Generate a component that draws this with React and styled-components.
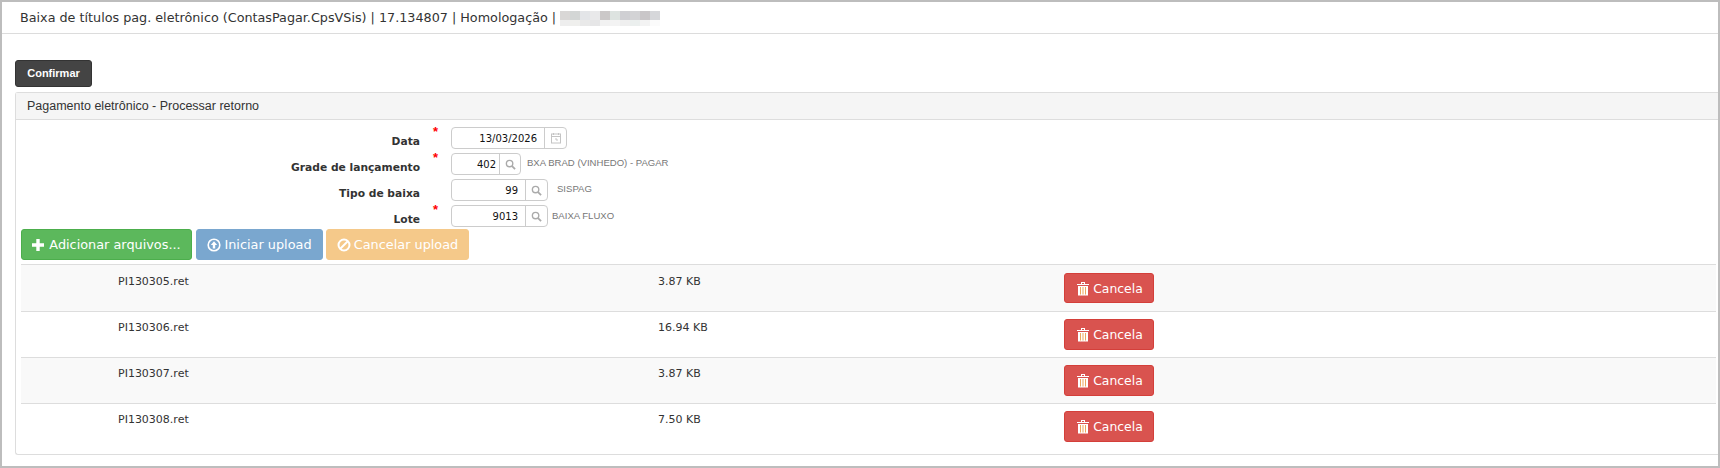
import React from "react";
import styled, { createGlobalStyle, css } from "styled-components";

const Global = createGlobalStyle`
  html, body { margin: 0; padding: 0; background: #fff; }
  * { box-sizing: border-box; }
`;

const Frame = styled.div`
  width: 1720px; height: 468px; overflow: hidden;
  border: 2px solid #bdbdbd;
  background: #fff;
  font-family: "DejaVu Sans", Verdana, sans-serif;
  color: #333;
  display: flex; flex-direction: column;
`;
const TitleBar = styled.div`
  height: 32px; flex: none; border-bottom: 1px solid #dcdcdc;
  display: flex; align-items: center; gap: 4px; padding: 0 0 0 18px;
  font-size: 12.75px; color: #333; white-space: nowrap;
`;
const Blur = styled.span`
  display: inline-grid; grid-template-columns: repeat(10, 10px); grid-template-rows: 9px 6px; margin-top: 1px;
`;
const BlurCell = styled.i`
  background: ${p => p.$c};
`;
const Body = styled.div`
  flex: 1; padding: 26px 0 0 13px; display: flex; flex-direction: column; align-items: stretch;
`;
const Confirm = styled.button`
  align-self: flex-start; width: 77px; height: 27px; border-radius: 3px; border: 1px solid #333;
  background: #444; color: #fff; font: bold 11px "Liberation Sans", Arial, sans-serif; padding: 0 0 2px;
`;
const Panel = styled.section`
  margin-top: 5px; height: 363px; border: 1px solid #ddd; border-right: 0; border-radius: 3px 0 0 3px;
  display: flex; flex-direction: column;
`;
const PanelHead = styled.div`
  height: 27px; flex: none; background: #f5f5f5; border-bottom: 1px solid #ddd;
  display: flex; align-items: center; padding-left: 11px;
  font: 12.5px "Liberation Sans", Arial, sans-serif; color: #333;
`;
const Form = styled.div`
  display: flex; flex-direction: column; gap: 4px; padding-top: 7px; height: 109px; flex: none;
`;
const FormRow = styled.div`
  height: 22px; display: grid; grid-template-columns: 404px 31px auto auto; align-items: start; justify-content: start;
`;
const Label = styled.label`
  font-size: 10.7px; font-weight: bold; color: #333; text-align: right; white-space: nowrap; padding-top: 8px; line-height: 14px;
`;
const Star = styled.span`
  color: #f00; font: bold 13px "Liberation Sans", Arial, sans-serif; padding-left: 13px; line-height: 10px;
`;
const InputGroup = styled.div`
  width: ${p => p.$w}px; height: 22px; border: 1px solid #ccc; border-radius: 4px; display: flex; background: #fff;
`;
const InputValue = styled.span`
  flex: 1; text-align: right; font-size: 10px; color: #111; line-height: 22px; padding-right: ${p => p.$pr}px;
`;
const Addon = styled.span`
  width: ${p => p.$w}px; flex: none; border-left: 1px solid #ccc; display: flex; align-items: center; justify-content: center; color: #aaa;
`;
const Desc = styled.span`
  margin-left: ${p => p.$ml}px; font: 9.55px "Liberation Sans", Arial, sans-serif; color: #777; line-height: 12px; padding-top: ${p => p.$pt}px; white-space: nowrap;
`;
const Toolbar = styled.div`
  display: flex; gap: 3px; padding-left: 5px; height: 31px; flex: none;
`;
const variants = {
  success: css`background: #5cb85c; border-color: #4cae4c;`,
  primary: css`background: #7aa7cf; border-color: #7aa7cf; margin-left: 1px;`,
  warning: css`background: #f5c98a; border-color: #f5c98a;`,
  danger: css`background: #d9534f; border-color: #d43f3a; font-size: 12.4px; gap: 4px; padding-left: 2px;`,
};
const Btn = styled.button`
  width: ${p => p.$w}px; height: ${p => p.$h || 31}px; border: 1px solid; border-radius: 3px;
  color: #fff; font: 12.85px "DejaVu Sans", Verdana, sans-serif; padding: 0;
  display: inline-flex; align-items: center; justify-content: center; gap: ${p => p.$gap || 3}px; white-space: nowrap;
  ${p => variants[p.$v]}
`;
const Table = styled.div`
  margin: 4px 2px 0 5px; border-top: 1px solid #ddd; flex: 1; display: flex; flex-direction: column;
`;
const Row = styled.div`
  height: ${p => (p.$last ? 51 : 46)}px; flex: none; display: grid; grid-template-columns: 637px 406px 1fr;
  padding-top: ${p => (p.$first ? 8 : 7)}px;
  background: ${p => (p.$odd ? "#f9f9f9" : "#fff")}; border-top: ${p => (p.$first ? 0 : "1px solid #ddd")};
  align-items: start;
`;
const Cell = styled.span`
  font-size: 11px; color: #333; line-height: 14px; margin-top: 2px; padding-left: ${p => p.$pl || 0}px;
`;

const SearchIcon = () => (
  <svg width="11" height="11" viewBox="0 0 12 12" fill="none" stroke="currentColor" strokeWidth="1.5"><circle cx="5" cy="5" r="3.5"/><path d="M7.7 7.7L11 11" strokeWidth="2"/></svg>
);
const CalIcon = () => (
  <svg width="12" height="12" viewBox="0 0 12 12" fill="none" stroke="#c4c4c4" strokeWidth="1"><rect x="1.5" y="2" width="9" height="9"/><path d="M1.5 4.5h9M3.5 1v2M8.5 1v2M5 7h2v2"/></svg>
);
const Plus = () => (
  <svg width="12" height="12" viewBox="0 0 12 12" fill="#fff"><path d="M4.3 0h3.4v4.3H12v3.4H7.7V12H4.3V7.7H0V4.3h4.3z"/></svg>
);
const Up = () => (
  <svg width="14" height="14" viewBox="0 0 14 14" fill="none" stroke="#fff"><circle cx="7" cy="7" r="5.8" strokeWidth="1.6"/><path d="M7 3.2L10.2 7H8.2v3.6H5.8V7H3.8z" fill="#fff" stroke="none"/></svg>
);
const Ban = () => (
  <svg width="14" height="14" viewBox="0 0 14 14" fill="none" stroke="#fff" strokeWidth="2"><circle cx="7" cy="7" r="5.5"/><path d="M3 11L11 3"/></svg>
);
const Trash = () => (
  <svg width="12" height="15" viewBox="0 0 12 15" fill="#fff"><path d="M0 3h12v1H0zM4 3V1h4v2H7V2H5v1z"/><path d="M1 5h10v9.5H1z"/><path d="M3 6h1v7.5H3zM5.5 6h1v7.5h-1zM8 6h1v7.5H8z" fill="#eda85c"/></svg>
);

const blur = [
  "#d9d7d6","#d3d6d5","#e3e5e8","#e9e9ea","#cbc8c8","#dde3e0","#cfcfd3","#d3d3d5","#c9c6c8","#d6d7da",
  "#eeeeee","#efefed","#e9e9e9","#e6e6e7","#f2f2f2","#f3f3f3","#efefef","#ebefee","#f3f3f3","#fbfbfb",
];
const files = [["PI130305.ret","3.87 KB"],["PI130306.ret","16.94 KB"],["PI130307.ret","3.87 KB"],["PI130308.ret","7.50 KB"]];

export default function App() {
  return (
    <Frame>
      <Global />
      <TitleBar>
        Baixa de títulos pag. eletrônico (ContasPagar.CpsVSis) | 17.134807 | Homologação |
        <Blur>{blur.map((c, i) => <BlurCell key={i} $c={c} />)}</Blur>
      </TitleBar>
      <Body>
        <Confirm>Confirmar</Confirm>
        <Panel>
          <PanelHead>Pagamento eletrônico - Processar retorno</PanelHead>
          <Form>
            <FormRow><Label>Data</Label><Star>*</Star><InputGroup $w={116}><InputValue $pr={7}>13/03/2026</InputValue><Addon $w={22}><CalIcon /></Addon></InputGroup></FormRow>
            <FormRow><Label>Grade de lançamento</Label><Star>*</Star><InputGroup $w={70}><InputValue $pr={3}>402</InputValue><Addon $w={21}><SearchIcon /></Addon></InputGroup><Desc $ml={6} $pt={4}>BXA BRAD (VINHEDO) - PAGAR</Desc></FormRow>
            <FormRow><Label>Tipo de baixa</Label><Star /><InputGroup $w={97}><InputValue $pr={7}>99</InputValue><Addon $w={22}><SearchIcon /></Addon></InputGroup><Desc $ml={9} $pt={4}>SISPAG</Desc></FormRow>
            <FormRow><Label>Lote</Label><Star>*</Star><InputGroup $w={97}><InputValue $pr={7}>9013</InputValue><Addon $w={22}><SearchIcon /></Addon></InputGroup><Desc $ml={4} $pt={5}>BAIXA FLUXO</Desc></FormRow>
          </Form>
          <Toolbar>
            <Btn $v="success" $w={171} $gap={5}><Plus /> Adicionar arquivos...</Btn>
            <Btn $v="primary" $w={127}><Up /> Iniciar upload</Btn>
            <Btn $v="warning" $w={143}><Ban /> Cancelar upload</Btn>
          </Toolbar>
          <Table>
            {files.map(([n, s], i) => (
              <Row key={n} $odd={i % 2 === 0} $first={i === 0} $last={i === 3}>
                <Cell $pl={97}>{n}</Cell>
                <Cell>{s}</Cell>
                <Btn $v="danger" $w={90} $h={i === 0 ? 30 : 31}><Trash /> Cancela</Btn>
              </Row>
            ))}
          </Table>
        </Panel>
      </Body>
    </Frame>
  );
}
